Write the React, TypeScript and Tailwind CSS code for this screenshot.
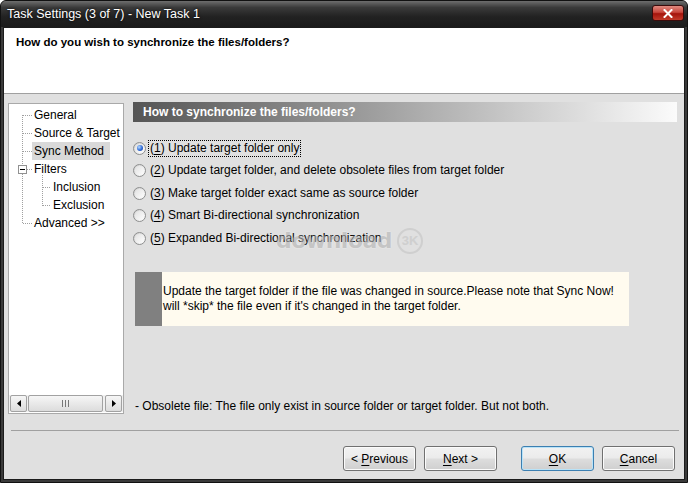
import React from "react";

const treeItems = [
  { label: "General", child: false, selected: false },
  { label: "Source & Target", child: false, selected: false },
  { label: "Sync Method", child: false, selected: true },
  { label: "Filters", child: false, selected: false },
  { label: "Inclusion", child: true, selected: false },
  { label: "Exclusion", child: true, selected: false },
  { label: "Advanced >>", child: false, selected: false },
];

const options = [
  { key: "1", text: "Update target folder only" },
  { key: "2", text: "Update target folder, and delete obsolete files from target folder" },
  { key: "3", text: "Make target folder exact same as source folder" },
  { key: "4", text: "Smart Bi-directional synchronization" },
  { key: "5", text: "Expanded Bi-directional synchronization" },
];

function Radio({ checked }: { checked?: boolean }) {
  return (
    <span className="flex h-[13px] w-[13px] shrink-0 items-center justify-center rounded-full border border-[#8e8f8f] bg-gradient-to-br from-[#cfcfcf] to-[#ffffff]">
      <span className="flex h-[9px] w-[9px] items-center justify-center rounded-full bg-gradient-to-br from-[#e2e2e2] to-[#fdfdfd]">
        {checked && (
          <span className="h-[6px] w-[6px] rounded-full bg-[radial-gradient(circle_at_35%_35%,#b8dcff,#2f6bd8_55%,#173c96)]" />
        )}
      </span>
    </span>
  );
}

function Btn({ pre, u, post, primary }: { pre?: string; u: string; post?: string; primary?: boolean }) {
  return (
    <button
      className={
        primary
          ? "h-[25px] w-[73px] rounded-[3px] border border-[#3c7fb1] bg-[linear-gradient(#f2f2f2_0%,#ebebeb_48%,#dddddd_52%,#cfcfcf_100%)] text-[12px] leading-none text-black shadow-[inset_0_0_0_1px_#b9e3f8]"
          : "h-[25px] w-[73px] rounded-[3px] border border-[#707070] bg-[linear-gradient(#f2f2f2_0%,#ebebeb_48%,#dddddd_52%,#cfcfcf_100%)] text-[12px] leading-none text-black shadow-[inset_0_0_0_1px_#fbfbfb]"
      }
    >
      {pre}
      <span className="underline underline-offset-2">{u}</span>
      {post}
    </button>
  );
}

function TreeLines() {
  const rows = [11, 29, 47, 119];
  return (
    <svg className="pointer-events-none absolute left-0 top-0" width="114" height="130">
      <g stroke="#a0a0a0" strokeDasharray="1 1" strokeWidth="1">
        <line x1="13.5" y1="11" x2="13.5" y2="61" />
        <line x1="13.5" y1="70" x2="13.5" y2="120" />
        {rows.map((y) => (
          <line key={y} x1="14" y1={y + 0.5} x2="23" y2={y + 0.5} />
        ))}
        <line x1="18" y1="65.5" x2="23" y2="65.5" />
        <line x1="33.5" y1="71" x2="33.5" y2="102" />
        <line x1="34" y1="83.5" x2="42" y2="83.5" />
        <line x1="34" y1="101.5" x2="42" y2="101.5" />
      </g>
      <rect x="9.5" y="61.5" width="8" height="8" fill="#fff" stroke="#919191" />
      <line x1="11" y1="65.5" x2="16" y2="65.5" stroke="#000" />
    </svg>
  );
}

export default function App() {
  return (
    <div className="flex h-[483px] w-[688px] flex-col overflow-hidden rounded-t-[6px] border border-[#111] bg-[#3a3a3a] font-['Liberation_Sans',Arial,sans-serif] text-[12px] text-black">
      {/* title bar */}
      <div className="flex h-[26px] shrink-0 items-center justify-between bg-[linear-gradient(#6e6e6e_0%,#3a3a3a_25%,#222_60%,#1b1b1b_100%)] pl-[6px] pr-[3px]">
        <span className="text-[12.5px] text-white [text-shadow:0_0_3px_#000]">Task Settings (3 of 7) - New Task 1</span>
        <div className="mt-[4px] flex h-[16px] w-[32px] items-center justify-center self-start rounded-[3px] border border-[#3a0b0b] bg-[linear-gradient(#e08a80_0%,#c9473d_45%,#a5140c_55%,#c23a2a_100%)]">
          <svg width="10" height="9" viewBox="0 0 10 9">
            <path d="M1.5 1 L8.5 8 M8.5 1 L1.5 8" stroke="#fff" strokeWidth="2" strokeLinecap="square" />
          </svg>
        </div>
      </div>

      {/* client */}
      <div className="mx-[2px] mb-[2px] flex flex-1 flex-col border border-[#1c1c1c] bg-[#e0e0e0]">
        <div className="h-[66px] shrink-0 border-b border-[#a0a0a0] bg-white pl-[12px] pt-[6px]">
          <div className="text-[11.5px] font-bold leading-[16px]">How do you wish to synchronize the files/folders?</div>
        </div>

        <div className="flex flex-1 flex-col">
          <div className="flex h-[320px] pl-[4px] pr-[7px] pt-[8px]">
            {/* tree */}
            <div className="relative mt-[1px] flex h-[311px] w-[116px] shrink-0 flex-col border border-[#a9a9a9] bg-white">
              <TreeLines />
              <div className="pt-[2px]">
                {treeItems.map((it) => (
                  <div key={it.label} className={it.child ? "flex h-[18px] items-center pl-[42px]" : "flex h-[18px] items-center pl-[23px]"}>
                    <span className={it.selected ? "whitespace-nowrap bg-[#d9d9d9] pl-[2px] pr-[6px] leading-[18px]" : "whitespace-nowrap pl-[2px] leading-[18px]"}>
                      {it.label}
                    </span>
                  </div>
                ))}
              </div>
              <div className="mb-[1px] mt-auto flex h-[17px] items-stretch gap-[1px] bg-[#f0f0f0] px-[1px]">
                <div className="flex w-[17px] items-center justify-center rounded-[2px] border border-[#a2a2a2] bg-[linear-gradient(#f6f6f6,#dcdcdc)]">
                  <svg width="4" height="7" viewBox="0 0 4 7"><path d="M4 0 L0 3.5 L4 7 Z" fill="#000" /></svg>
                </div>
                <div className="flex w-[75px] items-center justify-center rounded-[2px] border border-[#a2a2a2] bg-[linear-gradient(#f6f6f6,#dcdcdc)]">
                  <svg width="7" height="7" viewBox="0 0 7 7">
                    <path d="M0.5 0 V7 M3.5 0 V7 M6.5 0 V7" stroke="#777" />
                  </svg>
                </div>
                <div className="flex-1" />
                <div className="flex w-[17px] items-center justify-center rounded-[2px] border border-[#a2a2a2] bg-[linear-gradient(#f6f6f6,#dcdcdc)]">
                  <svg width="4" height="7" viewBox="0 0 4 7"><path d="M0 0 L4 3.5 L0 7 Z" fill="#000" /></svg>
                </div>
              </div>
            </div>

            {/* right column */}
            <div className="relative ml-[9px] flex flex-1 flex-col">
              <div className="flex h-[20px] items-center bg-[linear-gradient(to_right,#555555,#a8a8a8_50%,#fbfbfb)] pl-[10px]">
                <span className="font-bold text-white">How to synchronize the files/folders?</span>
              </div>
              <div className="mt-[15px] flex flex-col">
                {options.map((o, i) => (
                  <div key={o.key} className="flex h-[22.5px] items-center">
                    <Radio checked={i === 0} />
                    <span className={i === 0 ? "ml-[2px] whitespace-nowrap border border-dotted border-black px-[1px] leading-[15px]" : "ml-[3px] whitespace-nowrap px-[1px] leading-[15px]"}>
                      (<span className="underline underline-offset-2">{o.key}</span>) {o.text}
                    </span>
                  </div>
                ))}
              </div>

              <div className="ml-[2px] mt-[22px] flex h-[54px] w-[494px] bg-[#fffbef]">
                <div className="w-[27px] shrink-0 bg-[#808080]" />
                <div className="flex items-center pl-[1px] pr-[4px] leading-[15px]">
                  Update the target folder if the file was changed in source.Please note that Sync Now! will *skip* the file even if it's changed in the target folder.
                </div>
              </div>

              <div className="mb-[0px] ml-[2px] mt-auto leading-[15px]">- Obsolete file: The file only exist in source folder or target folder. But not both.</div>

              {/* watermark overlay */}
              <div className="pointer-events-none absolute left-[143px] top-[126px] flex items-center gap-[5px] opacity-60">
                <span className="font-['DejaVu_Sans',sans-serif] text-[22px] font-bold leading-none tracking-[-0.5px] text-[#b4b4b4] [text-shadow:0_0_2px_#fff]">download</span>
                <span className="flex h-[26px] w-[26px] items-center justify-center rounded-full border-2 border-[#c4c4c4] text-[13px] font-bold text-[#c4c4c4]">3K</span>
              </div>
            </div>
          </div>

          <div className="ml-[7px] mr-[5px] mt-[16px] h-[1px] bg-[#a0a0a0]" />

          <div className="mt-[15px] flex justify-end pr-[9px]">
            <Btn pre="< " u="P" post="revious" />
            <div className="w-[8px]" />
            <Btn u="N" post="ext >" />
            <div className="w-[24px]" />
            <Btn u="O" post="K" primary />
            <div className="w-[8px]" />
            <Btn u="C" post="ancel" />
          </div>
        </div>
      </div>
    </div>
  );
}
